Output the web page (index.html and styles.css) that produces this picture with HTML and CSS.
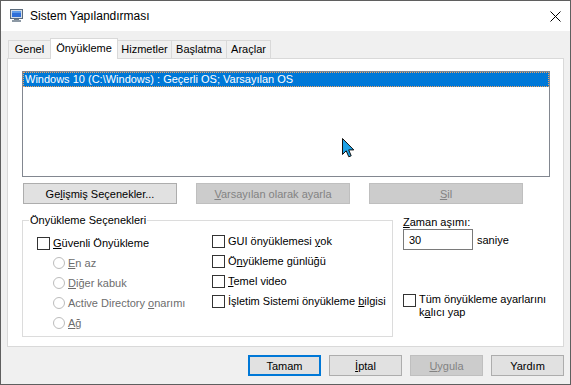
FILE: index.html
```html
<!DOCTYPE html>
<html>
<head>
  <meta charset="utf-8">
  <title>Sistem Yapılandırması</title>
  <link rel="stylesheet" href="styles.css">
</head>
<body>
  <div class="window">
    <div class="titlebar">
      <svg class="app-icon" viewBox="0 0 13 14">
        <rect x="0.5" y="0.5" width="12" height="9" fill="#d5dde6" stroke="#5b6b7c"/>
        <rect x="2" y="2" width="9" height="6" fill="#2f6fd8"/>
        <rect x="2" y="2" width="9" height="2" fill="#5f9be8"/>
        <rect x="4" y="10" width="5" height="1" fill="#6d7b89"/>
        <rect x="2" y="11" width="9" height="2" fill="#8d99a5"/>
      </svg>
      <span class="title">Sistem Yapılandırması</span>
      <svg class="close" viewBox="0 0 11 11">
        <path d="M0.5 0.5 L10.5 10.5 M10.5 0.5 L0.5 10.5" stroke="#000" stroke-width="1" fill="none"/>
      </svg>
    </div>

    <div class="client">
      <div class="tabs">
        <div class="tab tab-genel">Genel</div>
        <div class="tab tab-active">Önyükleme</div>
        <div class="tab tab-services">Hizmetler</div>
        <div class="tab tab-startup">Başlatma</div>
        <div class="tab tab-tools">Araçlar</div>
      </div>

      <div class="panel">
        <div class="listbox">
          <div class="list-item">Windows 10 (C:\Windows) : Geçerli OS; Varsayılan OS</div>
        </div>

        <div class="list-actions">
          <button class="btn btn-wide">Ge<u>l</u>işmiş Seçenekler...</button>
          <button class="btn btn-wide" disabled><u>V</u>arsayılan olarak ayarla</button>
          <button class="btn btn-wide" disabled><u>S</u>il</button>
        </div>

        <div class="options">
          <fieldset class="group">
            <legend>Önyükleme Seçenekleri</legend>
            <div class="group-cols">
              <div class="col col-main">
                <label class="row"><input type="checkbox" class="check"><span><u>G</u>üvenli Önyükleme</span></label>
                <label class="row row-sub"><input type="radio" class="radio" disabled><span><u>E</u>n az</span></label>
                <label class="row row-sub"><input type="radio" class="radio" disabled><span><u>D</u>iğer kabuk</span></label>
                <label class="row row-sub"><input type="radio" class="radio" disabled><span>Active Directory <u>o</u>narımı</span></label>
                <label class="row row-sub"><input type="radio" class="radio" disabled><span><u>A</u>ğ</span></label>
              </div>
              <div class="col col-extra">
                <label class="row"><input type="checkbox" class="check"><span>GUI önyüklemesi <u>y</u>ok</span></label>
                <label class="row"><input type="checkbox" class="check"><span>Ö<u>n</u>yükleme günlüğü</span></label>
                <label class="row"><input type="checkbox" class="check"><span><u>T</u>emel video</span></label>
                <label class="row"><input type="checkbox" class="check"><span>İşletim Sistemi önyükleme <u>b</u>ilgisi</span></label>
              </div>
            </div>
          </fieldset>

          <div class="side">
            <div class="side-label"><u>Z</u>aman aşımı:</div>
            <div class="timeout">
              <input class="timeout-input" type="text" value="30">
              <span class="unit">saniye</span>
            </div>
            <label class="persist">
              <input type="checkbox" class="check">
              <span>Tüm önyükleme ayarlarını<br>k<u>a</u>lıcı yap</span>
            </label>
          </div>
        </div>
      </div>

      <div class="footer">
        <button class="btn btn-footer btn-default">Tamam</button>
        <button class="btn btn-footer"><u>İ</u>ptal</button>
        <button class="btn btn-footer" disabled><u>U</u>ygula</button>
        <button class="btn btn-footer">Yardım</button>
      </div>
    </div>

    <svg class="cursor" viewBox="0 0 13 20">
      <path d="M0.5 0.5 L0.5 16.5 L4.2 12.8 L6.8 18.8 L9.2 17.8 L6.7 11.9 L11.8 11.9 Z" fill="#1ba1e6" stroke="#111" stroke-width="1" stroke-linejoin="miter"/>
    </svg>
  </div>
</body>
</html>
```

FILE: styles.css
```css
* {
    box-sizing: border-box;
}
body {
    margin: 0;
    font-family: "Liberation Sans", Arial, sans-serif;
    font-size: 11px;
    color: #000;
}
.window {
    position: relative;
    width: 571px;
    height: 385px;
    border: 1px solid #5f5f5f;
    background: #f0f0f0;
}
.titlebar {
    display: flex;
    align-items: center;
    height: 30px;
    padding: 0 9px;
    background: #fff;
}
.app-icon { width: 13px; height: 14px; flex: none; }
.title { margin-left: 7px; font-size: 12px; }
.close { margin-left: auto; width: 11px; height: 11px; }

.client { padding: 0 6px; }

.tabs {
    display: flex;
    align-items: flex-end;
    height: 27px;
    padding-left: 2px;
}
.tab {
    height: 18px;
    line-height: 17px;
    margin-left: -1px;
    border: 1px solid #d9d9d9;
    border-bottom: 0;
    background: #f0f0f0;
    text-align: center;
}
.tab-active {
    position: relative;
    z-index: 1;
    height: 21px;
    line-height: 18px;
    margin-bottom: -1px;
    background: #fff;
}
.tab-genel { width: 43px; }
.tab-active { width: 68px; }
.tab-services { width: 55px; }
.tab-startup { width: 56px; }
.tab-tools { width: 45px; }

.panel {
    height: 289px;
    padding: 12px 0 0 14px;
    border: 1px solid #d9d9d9;
    background: #fff;
}
.listbox {
    width: 528px;
    height: 106px;
    border: 1px solid #828790;
}
.list-item {
    height: 15px;
    line-height: 13px;
    padding-left: 1px;
    border: 1px dotted #f4a55e;
    background: #0078d7;
    color: #fff;
    white-space: nowrap;
}

.btn {
    height: 21px;
    padding: 0;
    border: 1px solid #adadad;
    background: #e1e1e1;
    color: #000;
    font: inherit;
}
.btn:disabled {
    border-color: #bfbfbf;
    background: #cccccc;
    color: #838383;
}
.btn-wide { width: 154px; }
.list-actions {
    display: flex;
    gap: 19px;
    margin: 6px 0 0 1px;
}

.options {
    display: flex;
    margin-top: 10px;
}
.group {
    width: 371px;
    height: 123px;
    margin: 0;
    padding: 0;
    border: 1px solid #dcdcdc;
}
.group legend {
    margin-left: 6px;
    padding: 0 1px;
    line-height: 13px;
}
.group-cols { display: flex; }
.col-main {
    width: 175px;
    margin-left: 14px;
    padding-top: 6px;
}
.col-extra { padding-top: 4px; }
.row {
    display: flex;
    align-items: center;
    height: 20px;
    white-space: nowrap;
}
.row-sub {
    padding-left: 16px;
    color: #6d6d6d;
}
.check, .radio {
    appearance: none;
    -webkit-appearance: none;
    flex: none;
    margin: 0 3px 0 0;
    background: #fff;
}
.check {
    width: 13px;
    height: 13px;
    border: 1px solid #333;
}
.radio {
    width: 12px;
    height: 12px;
    border: 1px solid #bcbcbc;
    border-radius: 50%;
}

.side { margin-left: 10px; }
.side-label {
    margin-top: 1px;
    line-height: 14px;
}
.timeout {
    display: flex;
    align-items: center;
}
.timeout-input {
    width: 70px;
    height: 21px;
    margin: 0;
    padding: 0 0 0 5px;
    border: 1px solid #7a7a7a;
    font: inherit;
    color: #000;
}
.unit { margin-left: 4px; }
.persist {
    display: flex;
    align-items: flex-start;
    margin-top: 43px;
    line-height: 13px;
}
.persist .check { margin-top: 1px; }

.footer {
    display: flex;
    justify-content: flex-end;
    gap: 8px;
    margin-top: 8px;
}
.btn-footer { width: 73px; }
.btn-default { border: 2px solid #0078d7; }

.cursor {
    position: absolute;
    left: 341px;
    top: 137px;
    width: 13px;
    height: 20px;
}
```
